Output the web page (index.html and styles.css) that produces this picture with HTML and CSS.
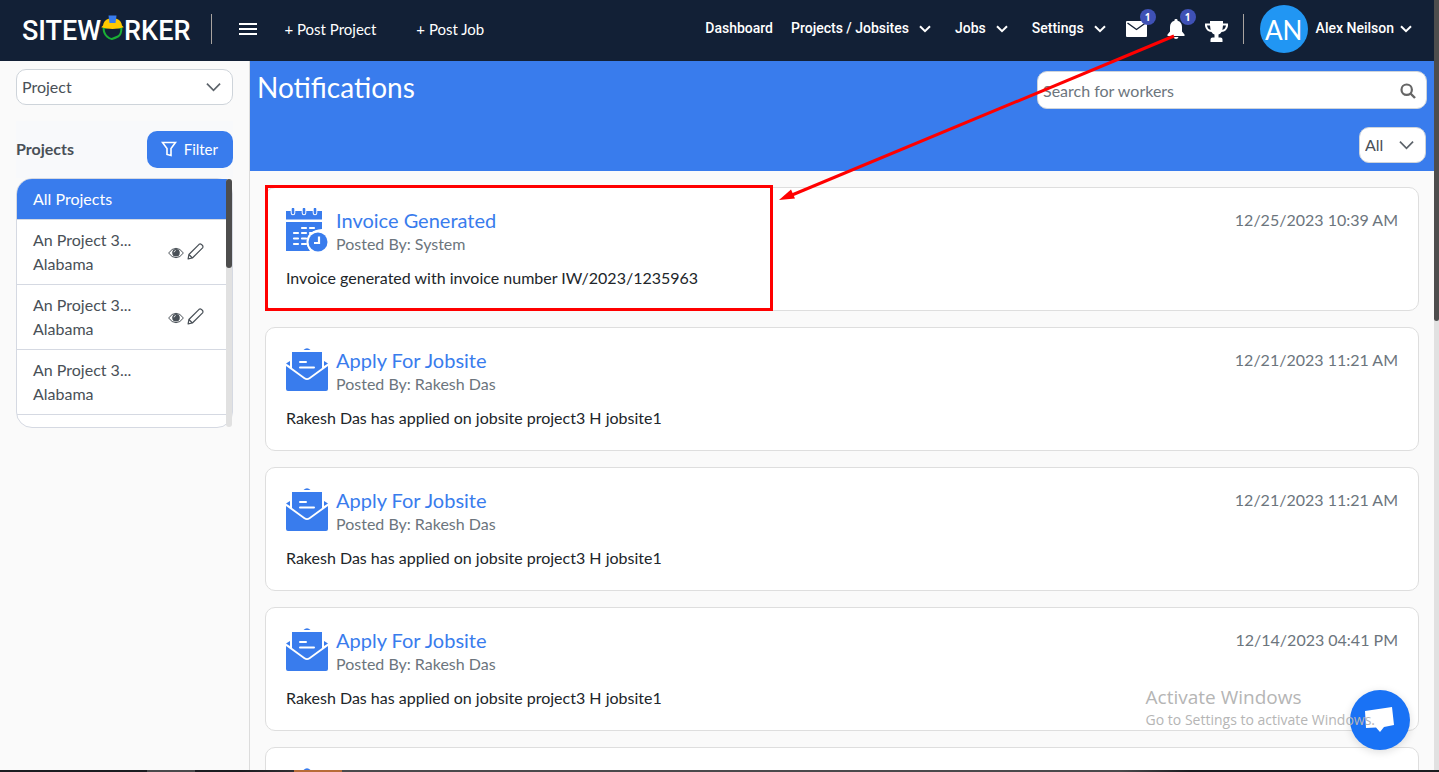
FILE: index.html
```
<!DOCTYPE html>
<html lang="en">
<head>
<meta charset="utf-8">
<title>Siteworker – Notifications</title>
<link rel="stylesheet" href="styles.css">
</head>
<body>
<svg class="defs" aria-hidden="true">
  <symbol id="caret" viewBox="0 0 12 8"><path d="M1 1.2 6 6.2 11 1.2" fill="none" stroke="currentColor" stroke-width="2"/></symbol>
  <symbol id="chevron" viewBox="0 0 16 10"><path d="M1 1.5 8 8.5 15 1.5" fill="none" stroke="currentColor" stroke-width="1.8"/></symbol>
  <symbol id="eye" viewBox="0 0 16 12"><path d="M.6 6Q4 1.3 8 1.3T15.400 6Q12 10.700 8 10.700T.6 6Z" fill="none" stroke="currentColor" stroke-width="1"/><circle cx="8" cy="5.700" r="3.800" fill="currentColor"/><path d="M6 5.300Q6.200 3.700 7.800 3.500" fill="none" stroke="#fff" stroke-width=".8"/></symbol>
  <symbol id="pencil" viewBox="0 0 18 18"><path d="M1.200 16.800 2 12.200 12.800 1.400Q14 .6 15.300 1.500L16.400 2.600Q17.300 3.900 16.500 5.100L5.700 15.900ZM2 12.200 5.700 15.900" fill="none" stroke="currentColor" stroke-width="1.300" stroke-linejoin="round"/></symbol>
  <symbol id="letter" viewBox="0 0 42 44">
    <path d="M17.500 2Q21 -1.500 24.500 2ZM4 13v5L0 15.500ZM38 13v5L42 15.500Z" fill="#397ced"/>
    <path d="M6 4H36V20L23 29.500Q21 30.800 19 29.500L6 20Z" fill="#397ced"/>
    <path d="M0 18 18 31Q21 33 24 31L42 18V41Q42 43 40 43H2Q0 43 0 41Z" fill="#397ced"/>
    <path d="M14 14H20M14 19.500H28" stroke="#fff" stroke-width="2" stroke-linecap="round"/>
  </symbol>
</svg>
<div class="screen">
  <div class="app">
    <header class="topbar">
      <a class="logo" href="#" aria-label="Siteworker"><span>SITEW</span><svg class="helmet" viewBox="0 0 23 26"><path d="M2.600 13Q2.600 18.500 6 21.500T11.500 23.800T17 21.500T20.400 13Q11.500 10.500 2.600 13Z" fill="#122036" stroke="#1aaf35" stroke-width="2"/><path d="M.2 12.300 2 10.500Q2.600 5.500 7.500 3.800H15.500Q20.400 5.500 21 10.500L22.800 12.300Q17 14 11.500 14T.2 12.300Z" fill="#ffc800"/><path d="M7.500 .5H15.500L14.500 8H8.500Z" fill="#397ced"/></svg><span>RKER</span></a>
      <span class="rule"></span>
      <button class="menu" aria-label="Menu"><svg viewBox="0 0 18 12"><path d="M0 1H18M0 6H18M0 11H18" stroke="#fff" stroke-width="2"/></svg></button>
      <nav class="post-links"><a href="#">+ Post Project</a><a href="#">+ Post Job</a></nav>
      <nav class="main-nav">
        <a href="#">Dashboard</a>
        <a href="#">Projects / Jobsites <svg class="caret"><use href="#caret"/></svg></a>
        <a href="#">Jobs <svg class="caret"><use href="#caret"/></svg></a>
        <a href="#">Settings <svg class="caret"><use href="#caret"/></svg></a>
      </nav>
      <div class="tools">
        <button class="tool" aria-label="Messages"><svg class="mail" viewBox="0 0 21 16"><rect width="21" height="16" rx="1" fill="#fff"/><path d="M1.500 2 10.500 8.500 19.500 2" fill="none" stroke="#122036" stroke-width="1.400"/></svg><span class="badge">1</span></button>
        <button class="tool" aria-label="Alerts"><svg class="bell" viewBox="0 0 18 20"><path d="M9 0a1.500 1.500 0 0 1 1.500 1.800C13.500 2.500 15 5 15 8V12.500L17.500 15.500V17H.5V15.500L3 12.500V8C3 5 4.500 2.500 7.500 1.800A1.500 1.500 0 0 1 9 0ZM6.500 18H11.500Q11 20 9 20T6.500 18Z" fill="#fff"/></svg><span class="badge">1</span></button>
        <button class="tool" aria-label="Awards"><svg class="trophy" viewBox="0 0 23 21"><path d="M5 0H18V2.500H23V5Q22 10.500 16.500 11Q15.300 13 13.500 13.500V16.500H15.500Q17.500 16.500 17.500 18.500V21H5.500V18.500Q5.500 16.500 7.500 16.500H9.500V13.500Q7.700 13 6.500 11Q1 10.500 0 5V2.500H5ZM5 4.500H2Q2.500 8 5.600 9ZM18 4.500 17.400 9Q20.500 8 21 4.500Z" fill="#fff"/></svg></button>
      </div>
      <span class="rule"></span>
      <button class="account"><span class="avatar">AN</span><span class="name">Alex Neilson <svg class="caret"><use href="#caret"/></svg></span></button>
    </header>
    <div class="columns">
      <aside class="sidebar">
        <div class="select"><select aria-label="Type"><option>Project</option></select><svg class="chevron"><use href="#chevron"/></svg></div>
        <div class="side-head"><h2>Projects</h2><button class="filter"><svg viewBox="0 0 16 16"><path d="M1.500 1.500H14.500L10 7.500V14.500L6 13.500V7.500Z" fill="none" stroke="#fff" stroke-width="1.600"/></svg>Filter</button></div>
        <div class="projects">
          <ul>
            <li class="active"><a href="#">All Projects</a></li>
            <li><a href="#">An Project 3...<br>Alabama</a><span class="actions"><button aria-label="View"><svg class="eye"><use href="#eye"/></svg></button><button aria-label="Edit"><svg class="pencil"><use href="#pencil"/></svg></button></span></li>
            <li><a href="#">An Project 3...<br>Alabama</a><span class="actions"><button aria-label="View"><svg class="eye"><use href="#eye"/></svg></button><button aria-label="Edit"><svg class="pencil"><use href="#pencil"/></svg></button></span></li>
            <li><a href="#">An Project 3...<br>Alabama</a></li>
          </ul>
          <span class="track"><span class="thumb"></span></span>
        </div>
      </aside>
      <main class="main">
        <div class="banner">
          <h1>Notifications</h1>
          <div class="controls">
            <div class="search"><input type="search" aria-label="Search for workers" placeholder="Search for workers"><svg viewBox="0 0 16 16"><circle cx="6.700" cy="6.700" r="5.200" fill="none" stroke="#666" stroke-width="2.200"/><path d="M10.500 10.500 15 15" stroke="#666" stroke-width="2.400"/></svg></div>
            <div class="select small"><select aria-label="Show"><option>All</option></select><svg class="chevron"><use href="#chevron"/></svg></div>
          </div>
        </div>
        <div class="cards">
          <article class="card">
            <div class="card-head">
              <svg class="card-icon" viewBox="0 0 42 44"><path d="M0 3H36V11.500H0ZM0 14H36V21Q21 22 21 35Q21 39 24 43H0Z" fill="#397ced"/><path d="M7 0V5M18 0V5M29 0V5" stroke="#fff" stroke-width="4.600" stroke-linecap="round"/><path d="M7 1V5M18 1V5M29 1V5" stroke="#397ced" stroke-width="2.600" stroke-linecap="round"/><path d="M16 20H20M24 20H28M8 25H12M16 25H20M24 25H27M8 30.500H12M16 30.500H20M8 36H12M16 36H20" stroke="#fff" stroke-width="2.200" stroke-linecap="round"/><circle cx="32" cy="34" r="11.500" fill="#fff"/><circle cx="32" cy="34" r="9.500" fill="#397ced"/><path d="M33 28.500V35H28" fill="none" stroke="#fff" stroke-width="2.200"/></svg>
              <div><h3>Invoice Generated</h3><p class="by">Posted By: System</p></div>
              <time>12/25/2023 10:39 AM</time>
            </div>
            <p class="text">Invoice generated with invoice number IW/2023/1235963</p>
            <span class="marker"></span>
          </article>
          <article class="card">
            <div class="card-head"><svg class="card-icon"><use href="#letter"/></svg><div><h3>Apply For Jobsite</h3><p class="by">Posted By: Rakesh Das</p></div><time>12/21/2023 11:21 AM</time></div>
            <p class="text">Rakesh Das has applied on jobsite project3 H jobsite1</p>
          </article>
          <article class="card">
            <div class="card-head"><svg class="card-icon"><use href="#letter"/></svg><div><h3>Apply For Jobsite</h3><p class="by">Posted By: Rakesh Das</p></div><time>12/21/2023 11:21 AM</time></div>
            <p class="text">Rakesh Das has applied on jobsite project3 H jobsite1</p>
          </article>
          <article class="card">
            <div class="card-head"><svg class="card-icon"><use href="#letter"/></svg><div><h3>Apply For Jobsite</h3><p class="by">Posted By: Rakesh Das</p></div><time>12/14/2023 04:41 PM</time></div>
            <p class="text">Rakesh Das has applied on jobsite project3 H jobsite1</p>
          </article>
          <article class="card">
            <div class="card-head"><svg class="card-icon"><use href="#letter"/></svg></div>
          </article>
        </div>
      </main>
    </div>
  </div>
  <div class="page-scroll"><span></span></div>
  <svg class="arrow" viewBox="0 0 400 170"><path d="M394 4 12 163" stroke="red" stroke-width="3"/><path d="M-1 168 11 157.500 15 166.500Z" fill="red"/></svg>
  <button class="chat" aria-label="Chat"><svg viewBox="0 0 30 26"><path d="M0 4 27 0 29 18 19 20 15 25 11 20.500 1 21Z" fill="#fff"/></svg></button>
  <div class="watermark"><strong>Activate Windows</strong><span>Go to Settings to activate Windows.</span></div>
</div>
<div class="taskbar"></div>
</body>
</html>
```
FILE: styles.css
```
* { box-sizing: border-box; }
body {
  margin: 0;
  height: 100vh;
  display: flex;
  flex-direction: column;
  overflow: hidden;
  background: #fafafa;
  color: #495057;
  font: 16px/24px Lato, sans-serif;
}
h1, h2, h3, p, ul { margin: 0; padding: 0; font-weight: 400; }
ul { list-style: none; }
a { color: inherit; text-decoration: none; }
button { border: 0; padding: 0; background: none; color: inherit; font: inherit; cursor: pointer; }
svg { display: block; flex: none; }
.defs { position: absolute; width: 0; height: 0; }
.screen { position: relative; flex: 1; min-height: 0; display: flex; overflow: hidden; }
.app { flex: 1; min-width: 0; display: flex; flex-direction: column; }

.topbar {
  height: 61px;
  flex: none;
  display: flex;
  align-items: center;
  padding: 0 22px 3px;
  background: #122036;
  color: #fff;
}
.logo { display: flex; align-items: center; font: 500 27px/32px Roboto, sans-serif; margin-top: 4px; }
.helmet { width: 23px; height: 26px; margin-bottom: 6px; }
.rule { width: 1px; height: 30px; background: #a8a39f; }
.logo + .rule { margin-left: 21px; }
.menu { margin-left: 27px; }
.menu svg { width: 18px; height: 12px; }
.post-links { display: flex; gap: 40px; margin-left: 27px; font-size: 15px; }
.main-nav { display: flex; gap: 18px; margin-left: auto; padding-bottom: 2px; font: 500 14px/20px Roboto, sans-serif; }
.main-nav a { display: flex; align-items: center; gap: 10px; }
.main-nav a + a + a { margin-left: 6px; }
.caret { width: 12px; height: 8px; margin-top: 2px; }
.tools { display: flex; align-items: center; gap: 20px; margin: 0 15px 0 20px; }
.tool { position: relative; }
.mail { width: 21px; height: 16px; }
.bell { width: 18px; height: 20px; }
.trophy { width: 23px; height: 21px; margin-top: 4px; }
.badge {
  position: absolute;
  right: -9px;
  top: -12px;
  width: 16px;
  height: 16px;
  border-radius: 50%;
  background: #3f51b5;
  font: 700 10px/16px "Open Sans", sans-serif;
}
.tool:nth-child(2) .badge { right: -11px; top: -10px; }
.account { display: flex; align-items: center; gap: 8px; margin-left: 16px; font: 500 14px/20px Roboto, sans-serif; }
.name { display: flex; align-items: center; gap: 6px; padding-bottom: 2px; }
.avatar { width: 48px; height: 48px; border-radius: 50%; background: #2196f3; font: 26px/50px Lato, sans-serif; }

.columns { flex: 1; min-height: 0; display: flex; }
.sidebar { width: 250px; flex: none; padding: 8px 16px; border-right: 1px solid #dcdcdc; }
.select { position: relative; }
.select select {
  width: 100%;
  height: 36px;
  padding: 0 5px;
  border: 1px solid #ced4da;
  border-radius: 10px;
  appearance: none;
  background: #fff;
  color: #495057;
  font: 16px/24px Lato, sans-serif;
}
.chevron { position: absolute; right: 12px; top: 13px; width: 15px; height: 10px; color: #5c636a; pointer-events: none; }
.side-head {
  display: flex;
  align-items: center;
  justify-content: space-between;
  margin-top: 16px;
  padding: 10px 0;
  background: #f8f9fb;
}
.side-head h2 { padding-bottom: 2px; font-size: 16px; font-weight: 700; }
.filter {
  display: flex;
  align-items: center;
  gap: 7px;
  height: 37px;
  padding: 0 15px 1px 14px;
  border-radius: 10px;
  background: #397ced;
  color: #fff;
  font-size: 15px;
}
.filter svg { width: 16px; height: 16px; }
.projects {
  position: relative;
  height: 250px;
  border: 1px solid #d5d9e2;
  border-radius: 16px;
  background: #fff;
}
.projects ul { margin-right: 5px; border-radius: 15px 0 0; overflow: hidden; }
.projects li {
  display: flex;
  align-items: center;
  justify-content: space-between;
  padding: 8px 23px 8px 16px;
  border-bottom: 1px solid #d5d9e2;
}
.projects .active { background: #397ced; color: #fff; }
.actions { display: flex; align-items: center; gap: 3px; padding-bottom: 2px; }
.eye { width: 16px; height: 12px; margin-top: 3px; }
.pencil { width: 17px; height: 17px; }
.track { position: absolute; right: 0; top: 0; bottom: 0; width: 6px; border-radius: 3px; background: #e1e1e1; }
.thumb { display: block; height: 89px; border-radius: 3px; background: #4d4d4d; }

.main { flex: 1; min-width: 0; }
.banner {
  display: flex;
  justify-content: space-between;
  padding: 10px 7px 8px;
  background: #397ced;
}
h1 { color: #fff; font-size: 28px; line-height: 32px; }
.controls { display: flex; flex-direction: column; align-items: flex-end; gap: 18px; width: 40%; max-width: 390px; }
.search { position: relative; width: 100%; }
.search input {
  display: block;
  width: 100%;
  height: 38px;
  padding: 0 36px 0 5px;
  border: 1px solid #ced4da;
  border-radius: 10px;
  background: #fff;
  font: 16px/24px Lato, sans-serif;
}
.search input::placeholder { color: #6c757d; }
.search svg { position: absolute; right: 11px; top: 12px; width: 16px; height: 16px; }
.small { width: 67px; margin-right: 1px; }

.cards { display: flex; flex-direction: column; gap: 16px; padding: 16px 15px; }
.card { position: relative; min-height: 124px; padding: 20px; border: 1px solid #dedede; border-radius: 10px; background: #fff; }
.card-head { display: flex; gap: 8px; }
.card-icon { width: 42px; height: 44px; }
h3 { color: #397ced; font-size: 20px; line-height: 24px; }
.by, time { color: #6c757d; }
time { margin-left: auto; }
.text { margin-top: 10px; color: #212529; }
.marker { position: absolute; left: -1px; top: -3px; width: 508px; height: 126px; border: 3px solid red; }

.page-scroll { width: 5px; background: #e1e1e1; }
.page-scroll span { display: block; height: 321px; background: #4d4d4d; border-radius: 0 0 3px 3px; }
.arrow { position: absolute; left: 780px; top: 32px; width: 400px; height: 170px; overflow: visible; pointer-events: none; }
.chat {
  position: absolute;
  right: 29px;
  bottom: 20px;
  width: 60px;
  height: 60px;
  display: grid;
  place-items: center;
  border-radius: 50%;
  background: #1972f5;
  box-shadow: 0 2px 8px #0002;
}
.chat svg { width: 30px; height: 26px; }
.watermark {
  position: absolute;
  right: 64px;
  bottom: 40px;
  display: flex;
  flex-direction: column;
  color: #b5b5b5;
  font: 14px/20px "Open Sans", sans-serif;
  pointer-events: none;
}
.watermark strong { font-size: 19px; line-height: 26px; font-weight: 400; }
.taskbar {
  height: 2px;
  flex: none;
  background: linear-gradient(90deg, #1b1c20 0 147px, #4a4a4c 147px 195px, #1b1c20 195px 240px, #303033 294px, #b86c38 294px 342px, #4a4a4c 342px 1120px, #1b1c20 1190px);
}
```
